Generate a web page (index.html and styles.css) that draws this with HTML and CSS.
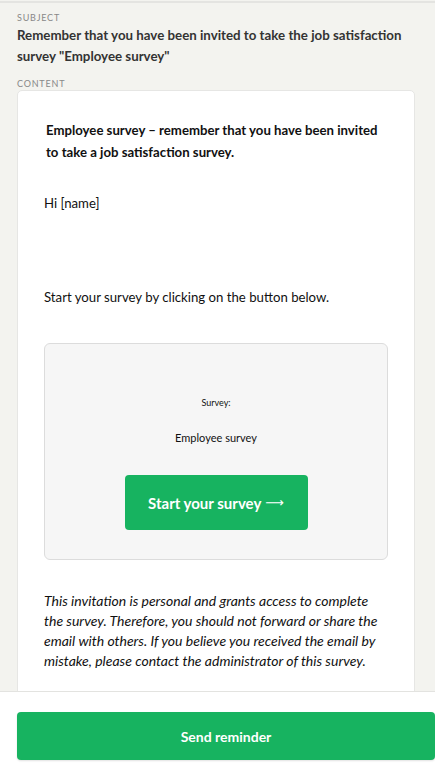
FILE: index.html
```html
<!DOCTYPE html>
<html>
<head>
<meta charset="utf-8">
<link rel="stylesheet" href="styles.css">
</head>
<body>
<div class="page">
  <main class="main">
    <div class="label subject-label">Subject</div>
    <div class="subject">Remember that you have been invited to take the job satisfaction survey "Employee survey"</div>
    <div class="label content-label">Content</div>
    <div class="card">
      <p class="heading">Employee survey – remember that you have been invited to take a job satisfaction survey.</p>
      <p class="greeting">Hi [name]</p>
      <p class="start">Start your survey by clicking on the button below.</p>
      <div class="survey-box">
        <div class="survey-label">Survey:</div>
        <div class="survey-name">Employee survey</div>
        <div class="start-btn">Start your survey <span class="arrow">⟶</span></div>
      </div>
      <p class="note">This invitation is personal and grants access to complete the survey. Therefore, you should not forward or share the email with others. If you believe you received the email by mistake, please contact the administrator of this survey.</p>
    </div>
  </main>
  <footer class="footer">
    <div class="send-btn">Send reminder</div>
  </footer>
</div>
</body>
</html>
```
FILE: styles.css
```css
* { box-sizing: border-box; }
html, body { margin: 0; padding: 0; }
body {
  font-family: Lato, "Open Sans", sans-serif;
  background: #f3f3ef;
  color: #222;
  width: 435px;
  height: 768px;
  overflow: hidden;
}
.page {
  display: flex;
  flex-direction: column;
  height: 768px;
}
.main {
  flex: 1;
  overflow: hidden;
  border-top: 2px solid #e4e4e1;
  margin-top: 1px;
  padding: 0 20px 0 17px;
  min-height: 0;
}
.label {
  font-size: 9px;
  letter-spacing: 0.8px;
  text-transform: uppercase;
  color: #888;
  line-height: 11px;
}
.subject-label { margin-top: 9px; }
.subject {
  font-size: 13.3px;
  font-weight: 700;
  color: #333;
  line-height: 21px;
  margin-top: 2px;
  margin-right: -10px;
}
.content-label { margin-top: 11px; }
.card {
  background: #fff;
  border: 1px solid #e6e6e4;
  border-radius: 5px;
  margin-top: 1px;
  padding: 28px 26px 40px 26px;
  height: 700px;
}
.card p { margin: 0; }
.heading {
  font-size: 13.2px;
  font-weight: 700;
  line-height: 22px;
  color: #111;
  padding-left: 2px;
}
.greeting {
  font-size: 13.2px;
  line-height: 22px;
  margin-top: 29px !important;
  color: #111;
}
.start {
  font-size: 13.2px;
  line-height: 22px;
  margin-top: 72px !important;
  color: #111;
}
.survey-box {
  margin-top: 35px;
  background: #f6f6f6;
  border: 1px solid #dcdcdc;
  border-radius: 6px;
  height: 217px;
  display: flex;
  flex-direction: column;
  align-items: center;
  padding-top: 53px;
}
.survey-label {
  font-size: 9px;
  line-height: 12px;
  color: #111;
}
.survey-name {
  font-size: 11px;
  line-height: 14px;
  color: #111;
  margin-top: 22px;
}
.start-btn {
  margin-top: 30px;
  background: #17b360;
  color: #fff;
  font-weight: 700;
  font-size: 15px;
  width: 183px;
  height: 55px;
  border-radius: 4px;
  display: flex;
  align-items: center;
  justify-content: center;
  gap: 4px;
}
.arrow {
  font-weight: 400;
  font-family: "DejaVu Sans", sans-serif;
  font-size: 13px;
}
.note {
  font-size: 14px;
  font-style: italic;
  line-height: 20px;
  color: #111;
  margin-top: 31px !important;
}
.footer {
  flex: none;
  height: 77px;
  background: #fff;
  border-top: 1px solid #e3e3e0;
  padding: 20px 0 0 17px;
}
.send-btn {
  width: 418px;
  height: 48px;
  background: #17b360;
  color: #fff;
  border-radius: 4px;
  font-weight: 700;
  font-size: 14px;
  display: flex;
  align-items: center;
  justify-content: center;
  box-shadow: 0 1px 2px rgba(0,0,0,0.12);
}
```
